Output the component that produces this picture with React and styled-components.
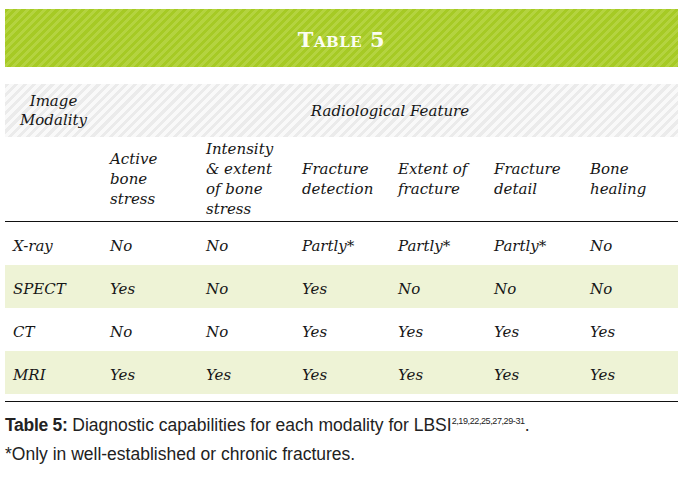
import React from 'react';
import styled, { createGlobalStyle } from 'styled-components';

const GlobalStyle = createGlobalStyle`
    body {
        margin: 0;
        background: #ffffff;
    }
`;

const columns = [
    'Active bone stress',
    'Intensity & extent of bone stress',
    'Fracture detection',
    'Extent of fracture',
    'Fracture detail',
    'Bone healing',
];

const headerLines = [
    ['Active', 'bone', 'stress'],
    ['Intensity', '& extent', 'of bone', 'stress'],
    ['Fracture', 'detection'],
    ['Extent of', 'fracture'],
    ['Fracture', 'detail'],
    ['Bone', 'healing'],
];

const rows = [
    { name: 'X-ray', values: ['No', 'No', 'Partly*', 'Partly*', 'Partly*', 'No'] },
    { name: 'SPECT', values: ['Yes', 'No', 'Yes', 'No', 'No', 'No'] },
    { name: 'CT', values: ['No', 'No', 'Yes', 'Yes', 'Yes', 'Yes'] },
    { name: 'MRI', values: ['Yes', 'Yes', 'Yes', 'Yes', 'Yes', 'Yes'] },
];

const App = () => {
    return (
        <Page>
            <GlobalStyle />
            <Banner>
                <BannerTitle>Table 5</BannerTitle>
            </Banner>

            <Table>
                <TopHeader>
                    <ModalityLabel>Image<br />Modality</ModalityLabel>
                    <FeatureLabel>Radiological Feature</FeatureLabel>
                </TopHeader>

                <ColumnHeader>
                    <HeadCell />
                    {headerLines.map((lines, i) => (
                        <HeadCell key={columns[i]} title={columns[i]}>
                            {lines.map((line) => (
                                <span key={line}>{line}</span>
                            ))}
                        </HeadCell>
                    ))}
                </ColumnHeader>

                {rows.map((row, index) => (
                    <Row key={row.name} $shaded={index % 2 === 1}>
                        <Cell>{row.name}</Cell>
                        {row.values.map((value, i) => (
                            <Cell key={i}>{value}</Cell>
                        ))}
                    </Row>
                ))}
            </Table>

            <Caption>
                <p>
                    <strong>Table 5:</strong> Diagnostic capabilities for each modality for LBSI
                    <sup>2,19,22,25,27,29-31</sup>.
                </p>
                <p>*Only in well-established or chronic fractures.</p>
            </Caption>
        </Page>
    );
};

const Page = styled.div`
    width: 673px;
    padding: 9px 0 0 5px;
    font-family: "DejaVu Serif", serif;
    color: #161616;
`;

const Banner = styled.div`
    height: 58px;
    display: flex;
    align-items: center;
    justify-content: center;
    background: repeating-linear-gradient(
        135deg,
        #a6ca25 0px,
        #a6ca25 3px,
        #b4d340 3px,
        #b4d340 6px
    );
`;

const BannerTitle = styled.div`
    font-family: "DejaVu Serif", serif;
    font-weight: 700;
    font-size: 21px;
    font-variant: small-caps;
    letter-spacing: 0.5px;
    color: #fbfdf2;
    padding-top: 2px;
`;

const Table = styled.div`
    margin-top: 17px;
    border-bottom: 1px solid #111;
    padding-bottom: 7px;
`;

const TopHeader = styled.div`
    display: grid;
    grid-template-columns: 97px 1fr;
    height: 53px;
    align-items: center;
    font-style: italic;
    font-size: 15px;
    background: repeating-linear-gradient(
        135deg,
        #ebebeb 0px,
        #ebebeb 3px,
        #f9f9f9 3px,
        #f9f9f9 6.5px
    );
`;

const ModalityLabel = styled.div`
    text-align: center;
    line-height: 19px;
`;

const FeatureLabel = styled.div`
    text-align: center;
`;

const ColumnHeader = styled.div`
    display: grid;
    grid-template-columns: 97px repeat(6, 96px);
    height: 84px;
    border-bottom: 1px solid #111;
    align-items: center;
`;

const HeadCell = styled.div`
    display: flex;
    flex-direction: column;
    padding-left: 8px;
    font-style: italic;
    font-size: 15px;
    line-height: 20px;
`;

const Row = styled.div`
    display: grid;
    grid-template-columns: 97px repeat(6, 96px);
    height: 43px;
    align-items: center;
    background: ${(p) => (p.$shaded ? '#eef3d6' : 'transparent')};
`;

const Cell = styled.div`
    padding-left: 8px;
    font-style: italic;
    font-size: 15px;
    padding-top: 5px;
`;

const Caption = styled.div`
    margin-top: 13px;
    font-family: "Liberation Sans Narrow", "Liberation Sans", sans-serif;
    font-size: 17.5px;
    color: #222;

    p {
        margin: 0 0 8px 0;
        line-height: 21px;
    }

    strong {
        font-weight: 700;
        letter-spacing: -0.3px;
    }

    sup {
        font-size: 9px;
        letter-spacing: -0.4px;
        vertical-align: 7px;
        line-height: 0;
    }
`;

export default App;
